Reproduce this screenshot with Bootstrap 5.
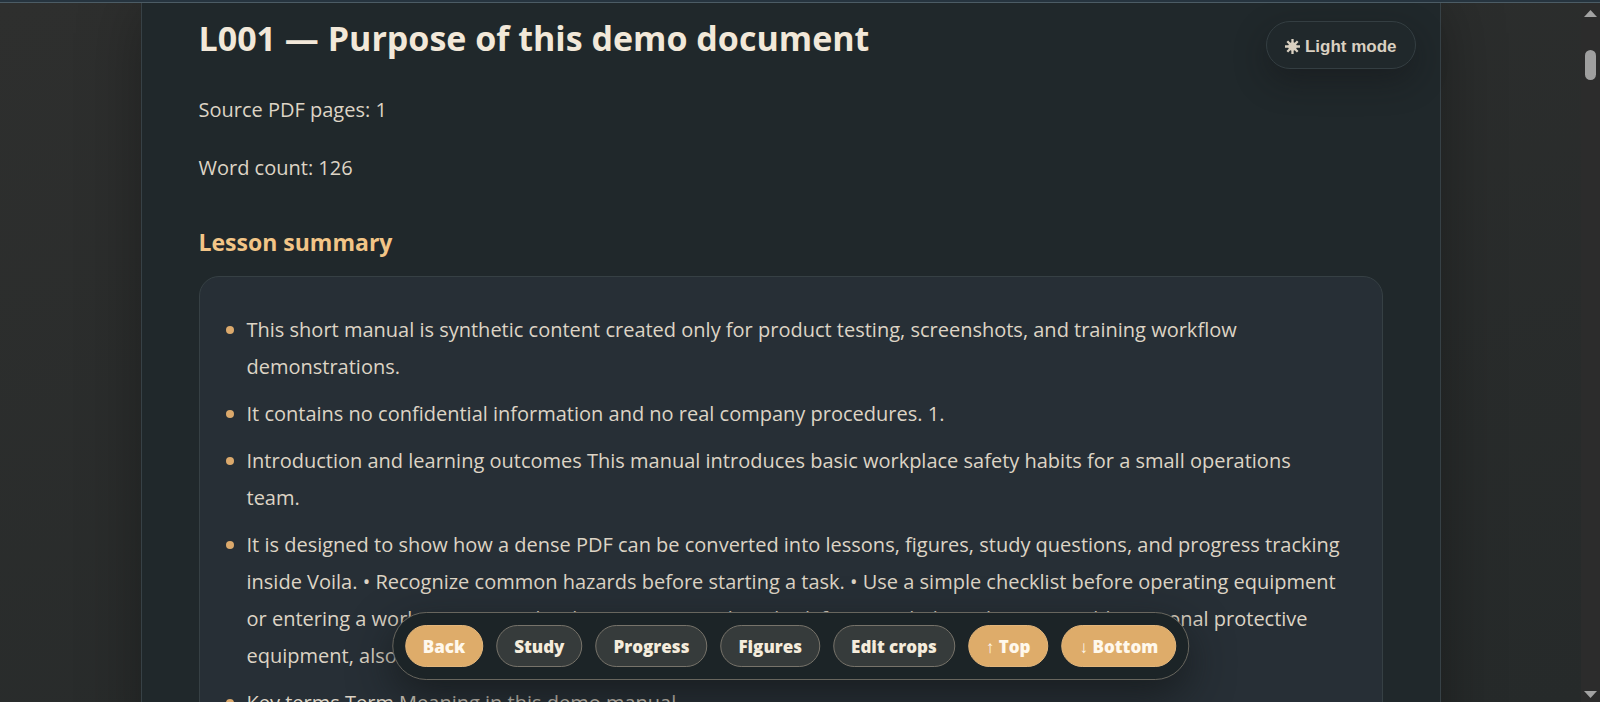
<!DOCTYPE html>
<html lang="en">
<head>
<meta charset="utf-8">
<meta name="viewport" content="width=device-width, initial-scale=1">
<title>L001 — Purpose of this demo document</title>
<link href="https://cdn.jsdelivr.net/npm/bootstrap@5.3.0/dist/css/bootstrap.min.css" rel="stylesheet">
<style>
  body { font-family: "Open Sans", "Noto Sans", sans-serif; font-size: 20px; line-height: 37px; color: #ddd4c5; background: #262928; }
  .top-rule { height: 3px; background: #26343f; border-bottom: 1px solid #4c5c65; z-index: 5; }
  .viewport { background: linear-gradient(165deg, #2e2f2e, #262a2a); }
  .sheet { max-width: 1300px; padding: 9px 57px 0; background: #20282b; border: solid #374146; border-width: 0 1px; box-shadow: 0 0 60px rgba(0,0,0,.32); }
  .sheet h1 { font-size: 34px; line-height: 52px; font-weight: 700; color: #f2e8d9; margin-bottom: 27px; }
  .sheet h2 { font-size: 23px; line-height: 32px; font-weight: 700; color: #f2c587; margin: 40px 0 18px; }
  .sheet p { margin-bottom: 21px; }
  .summary { background: #272f36; border: 1px solid #364044; border-radius: 20px; padding: 34px 37px 32px 47px; }
  .summary li { position: relative; margin-bottom: 10px; }
  .summary li::before { content: ""; position: absolute; left: -21px; top: 15px; width: 8px; height: 8px; border-radius: 50%; background: #dba96c; }
  .mode-btn { right: 24px; top: 18px; height: 48px; padding: 3px 18px 0; gap: 5px; font: 700 17px/24px "Liberation Sans", sans-serif; color: #d9d0c1; background: #20282b; border: 1px solid #343e42; border-radius: 24px; box-shadow: 0 12px 32px rgba(20,18,22,.42); }
  .dock { bottom: 22px; left: 50%; transform: translateX(-50%); padding: 12px; gap: 13px; background: #1c2427; border: 1px solid #68665e; border-radius: 34px; box-shadow: 0 16px 44px rgba(20,24,26,.75); }
  .dock button { height: 42px; padding: 1px 17px 0; font-size: 17px; line-height: 24px; font-weight: 800; color: #f5ecdc; background: #363b3b; border: 1px solid #77736a; border-radius: 21px; white-space: nowrap; }
  .dock button.accent { color: #fff8ec; background: #deac6a; border-color: #e3b67b; }
  .dock span { font-weight: 400; }
  .scroll-rail { width: 19px; background: #2c2c2c; padding: 7px 0 4px; }
  .scroll-thumb { width: 11px; height: 30px; border-radius: 6px; background: #9f9f9f; margin-top: 33px; }
</style>
</head>
<body class="vh-100 overflow-hidden d-flex flex-column">
<div class="top-rule flex-shrink-0"></div>
<div class="d-flex flex-grow-1 overflow-hidden">
  <div class="viewport position-relative flex-grow-1 overflow-hidden">
    <main class="sheet position-relative mx-auto">
      <h1>L001 — Purpose of this demo document</h1>
      <button type="button" class="mode-btn position-absolute d-flex align-items-center">
        <svg width="15" height="15" viewBox="0 0 15 15" aria-hidden="true"><g stroke="#d9d0c1" stroke-width="2.3"><path d="M7.500 0v15M0 7.500h15M2.300 2.300l10.400 10.400M12.700 2.300L2.300 12.700"/></g><circle cx="7.500" cy="7.500" r="4.300" fill="#d9d0c1"/></svg>
        Light mode
      </button>
      <p>Source PDF pages: 1</p>
      <p>Word count: 126</p>
      <h2>Lesson summary</h2>
      <section class="summary">
        <ul class="list-unstyled mb-0">
          <li>This short manual is synthetic content created only for product testing, screenshots, and training workflow demonstrations.</li>
          <li>It contains no confidential information and no real company procedures. 1.</li>
          <li>Introduction and learning outcomes This manual introduces basic workplace safety habits for a small operations team.</li>
          <li>It is designed to show how a dense PDF can be converted into lessons, figures, study questions, and progress tracking inside Voila. • Recognize common hazards before starting a task. • Use a simple checklist before operating equipment or entering a work area. • Decide when to stop a task and ask for some help. • Choose suitable personal protective equipment, also called PPE.</li>
          <li>Key terms Term Meaning in this demo manual</li>
        </ul>
      </section>
    </main>
    <nav class="dock position-absolute d-flex" aria-label="Lesson navigation">
      <button type="button" class="accent">Back</button>
      <button type="button">Study</button>
      <button type="button">Progress</button>
      <button type="button">Figures</button>
      <button type="button">Edit crops</button>
      <button type="button" class="accent"><span>↑</span> Top</button>
      <button type="button" class="accent"><span>↓</span> Bottom</button>
    </nav>
  </div>
  <div class="scroll-rail flex-shrink-0 d-flex flex-column align-items-center" aria-hidden="true">
    <svg width="13" height="7" viewBox="0 0 13 7"><path d="M0 7L6.500 0L13 7z" fill="#a3a3a3"/></svg>
    <div class="scroll-thumb"></div>
    <svg class="mt-auto" width="13" height="7" viewBox="0 0 13 7"><path d="M0 0L6.500 7L13 0z" fill="#a3a3a3"/></svg>
  </div>
</div>
<script src="https://cdn.jsdelivr.net/npm/bootstrap@5.3.0/dist/js/bootstrap.bundle.min.js"></script>
</body>
</html>
